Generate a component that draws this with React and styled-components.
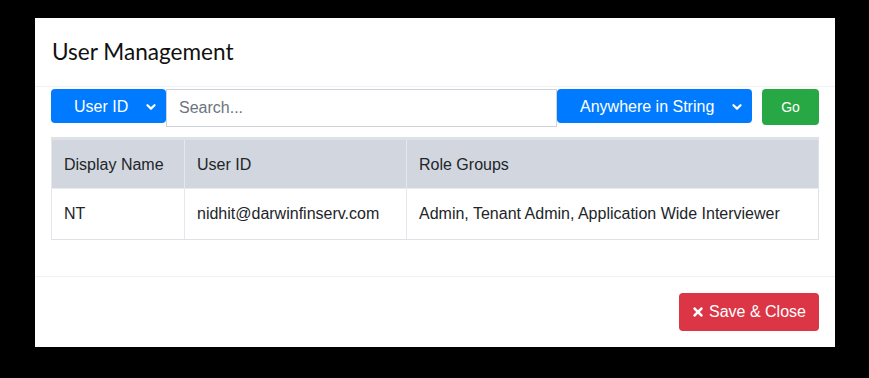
import styled, { createGlobalStyle } from "styled-components";
import { FaTimes } from "react-icons/fa";

const GlobalStyle = createGlobalStyle`
  html, body {
    margin: 0;
    padding: 0;
    background: #000;
  }
  body {
    font-family: "Liberation Sans", Arial, sans-serif;
    color: #212529;
  }
  * { box-sizing: border-box; }
`;

const rows = [
  { name: "NT", id: "nidhit@darwinfinserv.com", roles: "Admin, Tenant Admin, Application Wide Interviewer" },
];

function Chevron() {
  return (
    <svg width="10" height="8" viewBox="0 0 10 8">
      <path d="M1.5 2.2 L5 5.6 L8.5 2.2" fill="none" stroke="#fff" strokeWidth="2.2" strokeLinecap="round" strokeLinejoin="round" />
    </svg>
  );
}

export default function App() {
  return (
    <>
      <GlobalStyle />
      <Backdrop>
        <Modal>
          <Header>
            <Title>User Management</Title>
          </Header>
          <Body>
            <Toolbar>
              <Select width={115} pad={23}>
                <span>User ID</span>
                <Chevron />
              </Select>
              <SearchInput placeholder="Search..." />
              <Select width={195} pad={23}>
                <span>Anywhere in String</span>
                <Chevron />
              </Select>
              <GoButton>Go</GoButton>
            </Toolbar>
            <Table>
              <thead>
                <tr>
                  <Th width={133}>Display Name</Th>
                  <Th width={222}>User ID</Th>
                  <Th>Role Groups</Th>
                </tr>
              </thead>
              <tbody>
                {rows.map((r, i) => (
                  <tr key={i}>
                    <Td>{r.name}</Td>
                    <Td>{r.id}</Td>
                    <Td>{r.roles}</Td>
                  </tr>
                ))}
              </tbody>
            </Table>
          </Body>
          <Footer>
            <SaveButton>
              <FaTimes />
              Save &amp; Close
            </SaveButton>
          </Footer>
        </Modal>
      </Backdrop>
    </>
  );
}

const Backdrop = styled.div`
  width: 869px;
  height: 378px;
  padding: 18px 0 0 35px;
`;

const Modal = styled.div`
  width: 800px;
  background: #fff;
  display: flex;
  flex-direction: column;
`;

const Header = styled.header`
  padding: 16px 16px 16px 17px;
  border-bottom: 1px solid #f0f1f3;
`;

const Title = styled.h4`
  margin: 0;
  font-family: Lato, "Noto Sans", sans-serif;
  font-weight: 400;
  font-size: 22.6px;
  line-height: 36px;
  color: #111;
`;

const Body = styled.section`
  padding: 2px 16px 36px 16px;
`;

const Toolbar = styled.div`
  display: flex;
  align-items: flex-start;
  margin-bottom: 10px;
`;

const Select = styled.div`
  width: ${(p) => p.width}px;
  height: 34px;
  flex-shrink: 0;
  display: flex;
  align-items: center;
  justify-content: space-between;
  padding: 1px 10px 0 ${(p) => p.pad}px;
  background: #007bff;
  color: #fff;
  border-radius: 4px;
  font-size: 16px;
`;

const SearchInput = styled.input`
  flex: 1;
  height: 38px;
  border: 1px solid #ced4da;
  padding: 0 12px;
  font-family: "Liberation Sans", Arial, sans-serif;
  font-size: 16px;
  color: #495057;
  outline: none;
  &::placeholder {
    color: #6c757d;
  }
`;

const GoButton = styled.button`
  width: 57px;
  height: 36px;
  margin-left: 10px;
  flex-shrink: 0;
  border: none;
  border-radius: 4px;
  background: #28a745;
  color: #fff;
  font-family: "Liberation Sans", Arial, sans-serif;
  font-size: 14px;
`;

const Table = styled.table`
  width: 100%;
  border-collapse: collapse;
  border: 1px solid #dee2e6;
  border-top: 3px solid #dee2e6;
  font-size: 16px;
`;

const Th = styled.th`
  width: ${(p) => (p.width ? `${p.width}px` : "auto")};
  height: 50px;
  padding: 1px 12px 0;
  text-align: left;
  font-weight: 400;
  background: #d2d6de;
  border-top: 1px solid #eef0f3;
  border-left: 1px solid #e4e7eb;
  border-bottom: 1px solid #e9ecef;
`;

const Td = styled.td`
  height: 51px;
  padding: 0 12px;
  border-left: 1px solid #e4e7eb;
  border-bottom: 1px solid #dee2e6;
`;

const Footer = styled.footer`
  display: flex;
  justify-content: flex-end;
  padding: 16px;
  border-top: 1px solid #f0f1f3;
`;

const SaveButton = styled.button`
  width: 140px;
  height: 38px;
  display: flex;
  align-items: center;
  justify-content: center;
  gap: 5px;
  border: none;
  border-radius: 4px;
  background: #dc3545;
  color: #fff;
  font-family: "Liberation Sans", Arial, sans-serif;
  font-size: 16px;
  svg {
    width: 12px;
    height: 14px;
  }
`;
